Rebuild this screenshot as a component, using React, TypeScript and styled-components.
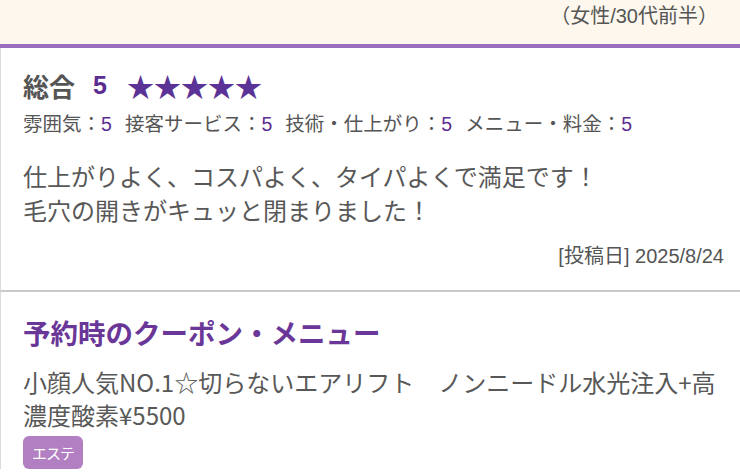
import React from 'react'
import styled, { createGlobalStyle } from 'styled-components';

const GlobalStyle = createGlobalStyle`
    body {
        margin: 0;
        background: #fff;
        font-family: "Noto Sans CJK JP", "Noto Sans", sans-serif;
        color: #555;
    }
`;

const ratings = [
    { label: '雰囲気', value: 5 },
    { label: '接客サービス', value: 5 },
    { label: '技術・仕上がり', value: 5 },
    { label: 'メニュー・料金', value: 5 },
];

const App = () => {
  return (
      <Page>
          <GlobalStyle />
          <Profile>（女性/30代前半）</Profile>
          <Review>
              <TotalRow>
                  <TotalLabel>総合</TotalLabel>
                  <TotalScore>5</TotalScore>
                  <Stars>★★★★★</Stars>
              </TotalRow>
              <RatingRow>
                  {ratings.map((r) => (
                      <Rating key={r.label}>
                          {r.label}：<Num>{r.value}</Num>
                      </Rating>
                  ))}
              </RatingRow>
              <Comment>
                  仕上がりよく、コスパよく、タイパよくで満足です！<br />
                  毛穴の開きがキュッと閉まりました！
              </Comment>
              <PostDate>[投稿日] 2025/8/24</PostDate>
          </Review>
          <Coupon>
              <CouponTitle>予約時のクーポン・メニュー</CouponTitle>
              <CouponText>
                  小顔人気NO.1☆切らないエアリフト　ノンニードル水光注入+高濃度酸素¥5500
              </CouponText>
              <Tag>エステ</Tag>
          </Coupon>
      </Page>
  )
}

const Page = styled.div`
    width: 740px;
    height: 476px;
    overflow: hidden;
`;

const Profile = styled.div`
    box-sizing: border-box;
    height: 48px;
    background: #fdf7ee;
    border-bottom: 4px solid #9a6ebf;
    text-align: right;
    padding-right: 22px;
    font-family: "Liberation Sans", "Noto Sans CJK JP", sans-serif;
    font-size: 20px;
    line-height: 32px;
    color: #555;
`;

const Section = styled.div`
    border-left: 1px solid #dcdcdc;
    padding: 0 16px 0 22px;
`;

const Review = styled(Section)`
    padding-top: 17px;
    padding-bottom: 22px;
    border-bottom: 2px solid #c9c9c9;
`;

const TotalRow = styled.div`
    display: flex;
    align-items: center;
    height: 40px;
`;

const TotalLabel = styled.span`
    font-size: 26px;
    font-weight: bold;
    color: #555;
`;

const TotalScore = styled.span`
    font-size: 25px;
    font-weight: bold;
    color: #5c2d91;
    margin-left: 18px;
    font-family: "Liberation Sans", sans-serif;
`;

const Stars = styled.span`
    font-size: 27px;
    color: #5b3396;
    margin-left: 20px;
`;

const RatingRow = styled.div`
    display: flex;
    gap: 13px;
    margin-top: 5px;
    font-size: 19.5px;
    line-height: 26px;
`;

const Rating = styled.span`
    color: #555;
`;

const Num = styled.span`
    color: #5c2d91;
    font-family: "Liberation Sans", sans-serif;
`;

const Comment = styled.p`
    margin: 22px 0 0;
    font-size: 24px;
    line-height: 34px;
    color: #585858;
`;

const PostDate = styled.div`
    margin-top: 17px;
    text-align: right;
    font-family: "Liberation Sans", "Noto Sans CJK JP", sans-serif;
    font-size: 20px;
    line-height: 24px;
    color: #555;
`;

const Coupon = styled(Section)`
    padding-top: 22px;
    padding-right: 22px;
`;

const CouponTitle = styled.h2`
    margin: 0;
    font-size: 27.5px;
    line-height: 36px;
    font-weight: bold;
    color: #6a3799;
`;

const CouponText = styled.p`
    margin: 15px 0 0;
    font-size: 24px;
    line-height: 33px;
    color: #585858;
`;

const Tag = styled.span`
    display: inline-flex;
    align-items: center;
    justify-content: center;
    margin-top: 5px;
    width: 60px;
    height: 33px;
    border-radius: 6px;
    background: #b17fc2;
    color: #fff;
    font-size: 15px;
    letter-spacing: -1px;
`;

export default App;
